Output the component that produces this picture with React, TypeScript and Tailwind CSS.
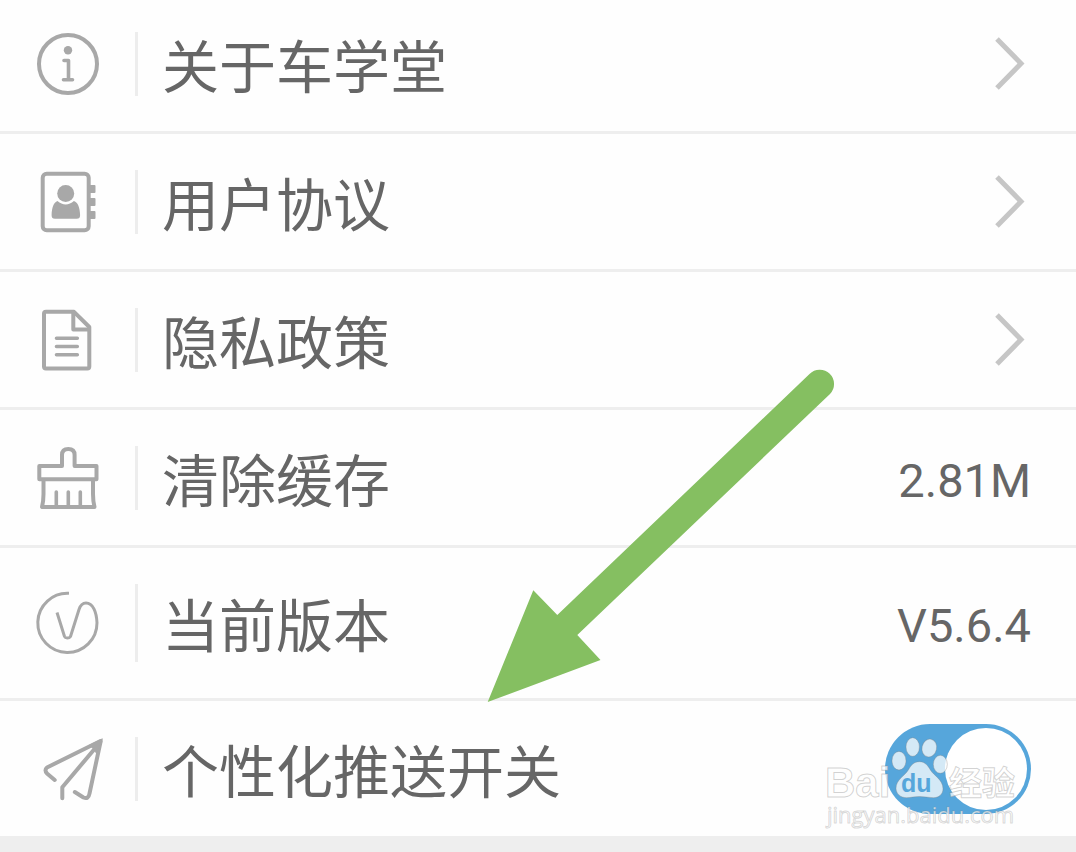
import { useState } from 'react';
import type { ReactNode } from 'react';

type RowProps = {
  icon: ReactNode;
  label: string;
  tall?: boolean;
  last?: boolean;
  children?: ReactNode;
};

function Icon({ children }: { children: ReactNode }) {
  return (
    <svg
      viewBox="0 0 64 64"
      className="w-16 h-16 shrink-0 overflow-visible"
      fill="none"
      stroke="#a8a8a8"
      strokeWidth="4"
      strokeLinecap="round"
      strokeLinejoin="round"
      aria-hidden="true"
    >
      {children}
    </svg>
  );
}

function InfoIcon() {
  return (
    <Icon>
      <circle cx="33" cy="32" r="29" />
      <circle cx="33" cy="18.2" r="4.2" fill="#a8a8a8" stroke="none" />
      <path d="M29 28.5h4.5v19M28.5 47.8h9" strokeWidth="3.6" />
    </Icon>
  );
}

function ContactsIcon() {
  return (
    <Icon>
      <rect x="7.7" y="3.8" width="46" height="56.4" rx="4" />
      <g fill="#a8a8a8" stroke="none">
        <circle cx="30.7" cy="23.5" r="8.5" />
        <path d="M22.5 31c5 4.6 11.4 4.6 16.4 0 4 1.4 6 6.5 6.200 14.300 0 2.400-1 3.500-3.400 3.500H20c-2.400 0-3.400-1.100-3.400-3.500.2-7.800 2.100-12.900 5.900-14.300z" />
        <path d="M55 15h4.500q1 0 1 1v6q0 1-1 1H55zM55 28h4.500q1 0 1 1v6q0 1-1 1H55zM55 41h4.500q1 0 1 1v6q0 1-1 1H55z" />
      </g>
    </Icon>
  );
}

function DocumentIcon() {
  return (
    <Icon>
      <path d="M11 3.8H39L54.3 19V58.5q0 2-2 2H11q-2 0-2-2V5.8q0-2 2-2z" />
      <path d="M38.3 4V21.5H54" />
      <path d="M21.5 30.2H42.3M21.5 38.5H42.3M21.5 46.8H42.3" strokeWidth="3.6" />
    </Icon>
  );
}

function BrushIcon() {
  return (
    <Icon>
      <path d="M27 20V9q0-6 6.3-6t6.3 6V20H61.5V33.3H4.3V20z" />
      <path d="M8.5 34V48q0 7-1.500 13H59.5Q58 55 58 48V34" />
      <path d="M21.3 46V60M33.3 46V60M45.3 46V60" strokeWidth="3.6" />
    </Icon>
  );
}

function VersionIcon() {
  return (
    <Icon>
      <path
        d="M34 2.3A29.6 29.6 0 1 0 62 31.7C61.500 21 58 12 51 12 46.5 12 45 15.5 44 18.5L35.500 45.500Q34.500 47 32.3 47T29.500 45.500L22 21.5"
        strokeWidth="3"
        strokeLinecap="butt"
      />
    </Icon>
  );
}

function PlaneIcon() {
  return (
    <Icon>
      <path d="M65.5 4 12 30.5Q9 33 12 36.5L19.7 43" />
      <path d="M65 5.5 27.3 50.2V61.3" />
      <path d="M65.5 5 54.5 56.5Q53.5 62.5 48.5 60.5L39.8 55" />
      <path d="M67 2 54 8.5 58 11 62 17z" fill="#a8a8a8" strokeWidth="1" strokeLinejoin="miter" />
    </Icon>
  );
}

function Chevron() {
  return (
    <svg viewBox="0 0 36 56" className="w-9 h-14" fill="none" stroke="#c6c6c6" strokeWidth="5" aria-hidden="true">
      <path d="M2 3 26 27.5 2 52" />
    </svg>
  );
}

function Row({ icon, label, tall, last, children }: RowProps) {
  return (
    <div
      className={`flex items-center pl-[35px] pr-[45px] ${tall ? 'min-h-[153px]' : last ? 'min-h-[135px]' : 'min-h-[138px]'} ${
        last ? '' : 'border-b-3 border-[#eeeeee]'
      }`}
    >
      {icon}
      <span className={`ml-9 mr-6 w-[3px] shrink-0 bg-[#ededed] ${tall ? 'h-[78px]' : 'h-16'}`} />
      <span className="flex-1 pb-0.5 text-[57px] leading-[64px]">{label}</span>
      {children}
    </div>
  );
}

function Value({ children }: { children: ReactNode }) {
  return <span className="pt-1.5 font-[Roboto,sans-serif] text-[47px] leading-[56px]">{children}</span>;
}

function Watermark() {
  return (
    <svg
      viewBox="0 0 204 104"
      className="absolute right-[50px] bottom-0 w-[204px] h-[104px] pointer-events-none"
      fill="#ffffff"
      fillOpacity="0.75"
      stroke="#808080"
      strokeOpacity="0.35"
      strokeWidth="1"
      aria-hidden="true"
    >
      <text x="3" y="65" fontFamily="'Liberation Sans', sans-serif" fontWeight="700" fontSize="42">
        Bai
      </text>
      <ellipse cx="77" cy="28.7" rx="7" ry="9.3" />
      <ellipse cx="90.7" cy="15" rx="6.7" ry="9.3" />
      <ellipse cx="107.3" cy="16" rx="7.3" ry="9" transform="rotate(12 107.3 16)" />
      <ellipse cx="118.3" cy="32.3" rx="7" ry="9" />
      <path d="M97.500 29.700c5.500 0 8.500 4 11 8.500 3 5 12.500 9.500 12.500 18.500 0 5.500-4 9-9.500 9-5 0-9-1.200-14-1.200s-9 1.200-13 1.200c-6 0-10.500-4-10.500-9.500 0-8.500 9-12.500 12.500-18.500 2.500-4.500 5.500-8 11-8z" />
      <text
        x="79"
        y="60"
        fontFamily="'Liberation Sans', sans-serif"
        fontWeight="700"
        fontSize="25"
        fill="#56a6db"
        fillOpacity="1"
        stroke="none"
      >
        du
      </text>
      <text x="127" y="63" fontFamily="'Noto Sans CJK SC', sans-serif" fontWeight="700" fontSize="33">
        经验
      </text>
      <text x="5" y="91" fontFamily="'Open Sans', sans-serif" fontSize="22" strokeOpacity="0.3">
        jingyan.baidu.com
      </text>
    </svg>
  );
}

function Arrow() {
  return (
    <svg
      viewBox="0 0 348 334"
      className="absolute left-[487px] top-[369px] w-[348px] h-[334px] pointer-events-none"
      fill="#85bf61"
      aria-hidden="true"
    >
      <path d="M.7 333 46.3 221.3 70.3 246 322.5 5A14 14 0 0 1 343 25L90.3 266 113.5 291z" />
    </svg>
  );
}

export default function App() {
  const [push, setPush] = useState(true);

  return (
    <div className="relative min-h-screen overflow-hidden bg-[#eeeeee] text-[#666666] font-['Noto_Sans_CJK_SC',sans-serif]">
      <main className="-mt-1 bg-[#fefefe]">
        <a href="#about" className="block">
          <Row icon={<InfoIcon />} label="关于车学堂">
            <Chevron />
          </Row>
        </a>
        <a href="#agreement" className="block">
          <Row icon={<ContactsIcon />} label="用户协议">
            <Chevron />
          </Row>
        </a>
        <a href="#privacy" className="block">
          <Row icon={<DocumentIcon />} label="隐私政策">
            <Chevron />
          </Row>
        </a>
        <button type="button" className="block w-full text-left">
          <Row icon={<BrushIcon />} label="清除缓存">
            <Value>2.81M</Value>
          </Row>
        </button>
        <Row icon={<VersionIcon />} label="当前版本" tall>
          <Value>V5.6.4</Value>
        </Row>
        <label className="relative block">
          <Row icon={<PlaneIcon />} label="个性化推送开关" last>
            <input
              type="checkbox"
              role="switch"
              checked={push}
              onChange={(e) => setPush(e.target.checked)}
              className="flex items-center appearance-none w-[146px] h-[90px] p-1 rounded-full bg-[#cccccc] checked:bg-[#56a6db] checked:justify-end before:content-[''] before:w-[82px] before:h-[82px] before:rounded-full before:bg-white"
            />
          </Row>
          <Watermark />
        </label>
      </main>
      <Arrow />
    </div>
  );
}
